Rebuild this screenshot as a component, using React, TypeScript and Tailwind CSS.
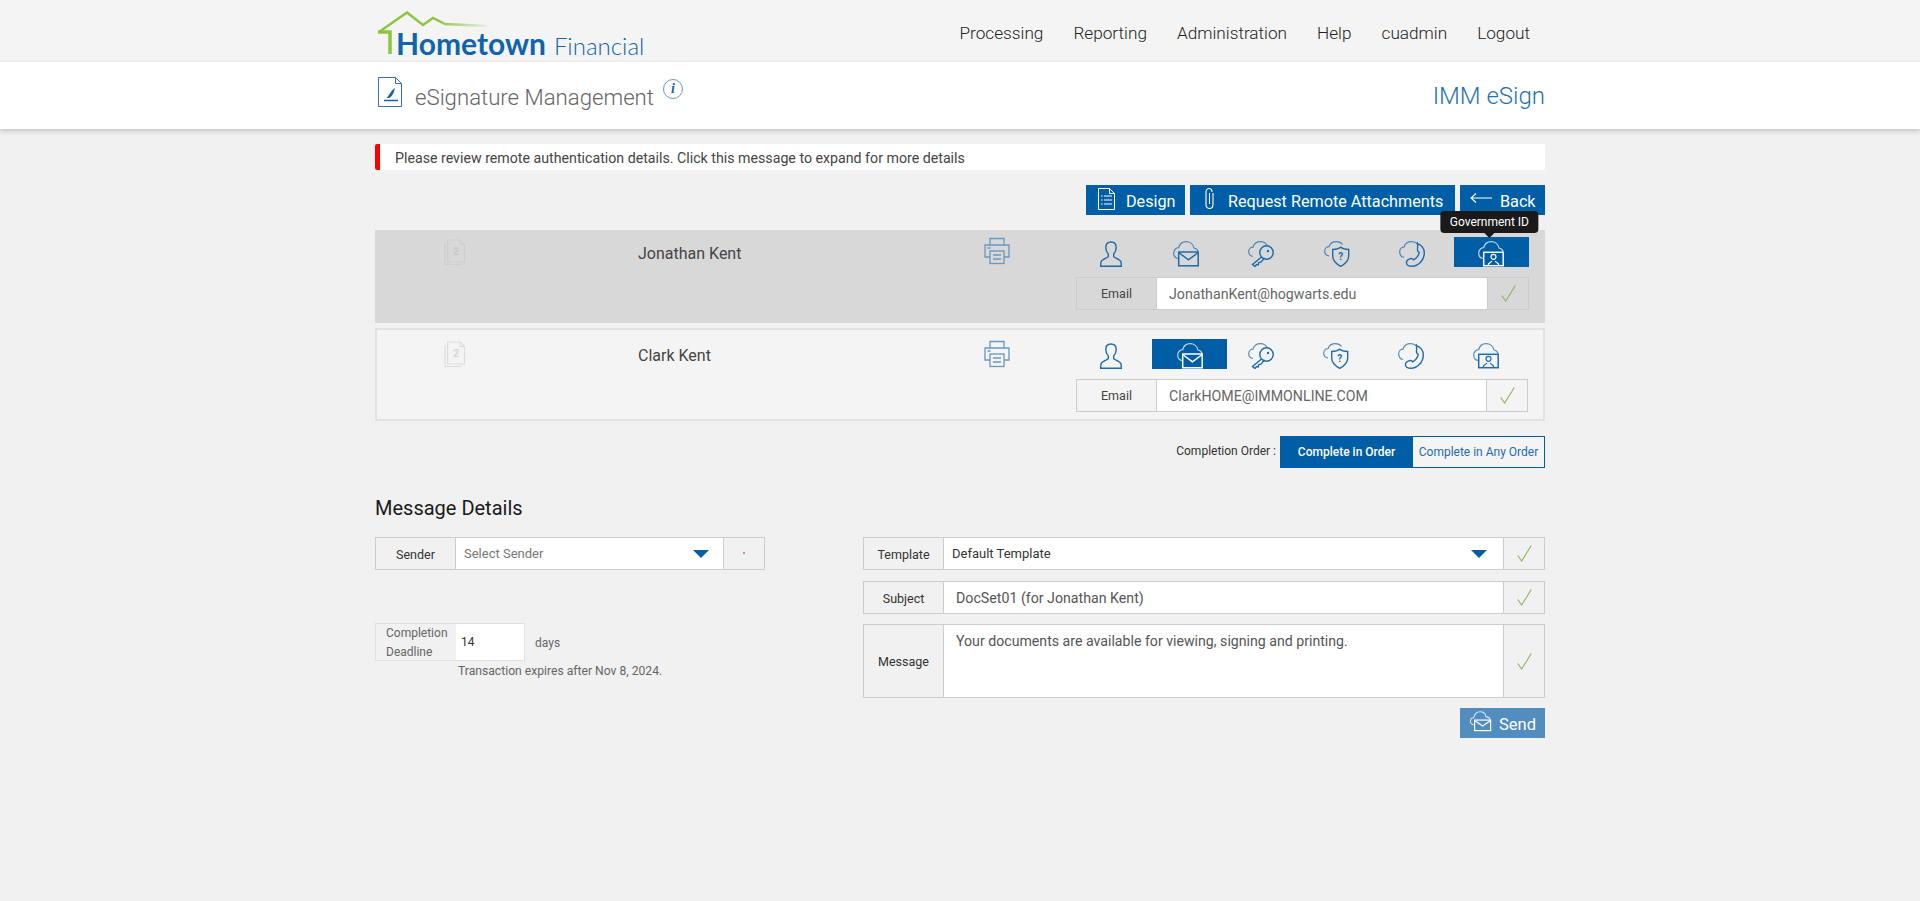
import React from 'react';

const Cloud = () => (
  <path d="M5 17.500C2.300 17 .7 14.500 .7 12 .7 9 3 6.700 5.700 6.700 6.700 3 9.500 .7 13 .7c4 0 7.300 2.600 8 6.300 2 .4 3.500 1.700 4 3.500" opacity=".75" />
);

const PersonIcon = () => (
  <svg viewBox="0 0 22 26" className="h-[26px] w-[22px]" fill="none" stroke="currentColor" strokeWidth="1.400">
    <path d="M11 1c-3.400 0-5.200 2.300-5.200 5.600 0 2.900 1 5 2.500 6.500v2.600C6.800 17 1.800 18.200 1 21c-.3 1.200-.3 2.500-.3 4.200h20.600c0-1.700 0-3-.3-4.200-.8-2.800-5.800-4-7.300-5.300v-2.600c1.500-1.500 2.500-3.600 2.500-6.500C16.200 3.300 14.400 1 11 1z" />
  </svg>
);

const MailIcon = () => (
  <svg viewBox="0 0 26 26" className="h-[26px] w-[26px]" fill="none" stroke="currentColor" strokeWidth="1.200">
    <Cloud />
    <rect x="5.700" y="11" width="19.500" height="13.800" strokeWidth="1.500" />
    <path d="M5.700 11.500l9.750 7.300 9.750-7.300" strokeWidth="1.500" />
  </svg>
);

const KeyIcon = () => (
  <svg viewBox="0 0 26 26" className="h-[26px] w-[26px]" fill="none" stroke="currentColor" strokeWidth="1.200">
    <path d="M5 15.500C2.500 15 .7 13 .7 10.700.7 8 2.800 6.200 5 6.200 6 3 9 .7 12.500.7c2.800 0 5.200 1.300 6.500 3.600" opacity=".75" />
    <circle cx="18.500" cy="11.500" r="6.700" strokeWidth="1.400" />
    <circle cx="20" cy="10" r="1.200" fill="currentColor" stroke="none" />
    <path d="M13.500 16L4.500 23.500l2.500 2 1.500-2 1.800.4.400-2.400 2.300-.4 3.500-4.300" strokeWidth="1.400" />
  </svg>
);

const ShieldIcon = () => (
  <svg viewBox="0 0 26 26" className="h-[26px] w-[26px]" fill="none" stroke="currentColor" strokeWidth="1.200">
    <path d="M5 15C2.500 14.500 .7 12.500 .7 10.200.7 7.500 2.800 5.700 5 5.700 6 2.700 9 .7 12.500.7c2.500 0 4.700 1 6 2.800" opacity=".75" />
    <path d="M8.700 8.500c3.500 0 6.200-.8 8-2.300 1.800 1.500 4.500 2.300 8 2.300v6.500c0 4.500-3.300 7.800-8 10.300-4.700-2.500-8-5.800-8-10.300z" strokeWidth="1.400" />
    <text x="16.700" y="18.500" textAnchor="middle" fontSize="10" fontWeight="700" fill="currentColor" stroke="none" fontFamily="Roboto, sans-serif">?</text>
  </svg>
);

const PhoneIcon = () => (
  <svg viewBox="0 0 26 26" className="h-[26px] w-[26px]" fill="none" stroke="currentColor" strokeWidth="1.200">
    <path d="M5 16.500C2.500 16 .7 13.500 .7 10.700.7 8 2.800 6.200 5 6.200 6 3 9 .7 12.500.7c1.800 0 3.500.5 5 1.600" opacity=".75" />
    <path d="M18 2.500c4.300 1.200 7.300 5 7.300 9.500 0 7-6 13.300-12.300 13.300-3 0-5.200-1.300-5.500-3.300-.3-1.800 1-3.400 3.200-4.200 2-.7 3.300-.3 4 1 2.700-1.200 5.300-4.700 5.500-7.500-1.300-.6-1.900-1.700-1.700-3.500.1-2 .5-4.300-.2-5.800z" strokeWidth="1.400" />
  </svg>
);

const GovIdIcon = () => (
  <svg viewBox="0 0 26 26" className="h-[26px] w-[26px]" fill="none" stroke="currentColor" strokeWidth="1.200">
    <Cloud />
    <rect x="5.700" y="11.300" width="19.500" height="13.400" strokeWidth="1.500" />
    <circle cx="15.500" cy="15.800" r="2.500" />
    <path d="M10 24.700c0-3 2.800-3.200 4-4.600M21 24.700c0-3-2.800-3.200-4-4.600" />
  </svg>
);

const Check = () => (
  <svg viewBox="0 0 15 17" className="h-[17px] w-[15px]" fill="none" stroke="#8db45c" strokeWidth="1.100">
    <path d="M.7 10.500L4.700 16 14.300 .5" />
  </svg>
);

const DocCount = ({ selected }: { selected?: boolean }) => (
  <svg viewBox="0 0 21 26" className="h-[26px] w-[21px]" fill="none" stroke={selected ? '#cecece' : '#dcdcdc'} strokeWidth="1.200">
    <path d="M1 4v21.500h17" />
    <path d="M3.600 1h12.400l4.500 4.500v17.500h-16.900z" />
    <path d="M16 1v4.500h4.500" />
    <text x="12" y="16" textAnchor="middle" fontSize="10.500" fontWeight="700" fill={selected ? '#cacaca' : '#d6d6d6'} stroke="none" fontFamily="Roboto, sans-serif">2</text>
  </svg>
);

const Printer = () => (
  <svg viewBox="0 0 28 28" className="h-7 w-7 text-[#6a97c1]" fill="none" stroke="currentColor" strokeWidth="1.300">
    <path d="M7 8V1.500h14V8" />
    <path d="M7 20H2V8h24v12h-5" />
    <rect x="7" y="14" width="14" height="12.500" />
    <path d="M10 18h8M10 22h8M4.500 11h3" />
  </svg>
);

const signerIcons = [PersonIcon, MailIcon, KeyIcon, ShieldIcon, PhoneIcon, GovIdIcon];

function SignerRow({ name, email, active, selected }: { name: string; email: string; active: number; selected?: boolean }) {
  return (
    <div className={`flex h-[93px] border-2 ${selected ? 'border-[#d8d8d8] bg-[#d8d8d8] pr-[13px]' : 'border-[#e2e2e2] bg-[#f4f4f4] pr-[15px]'}`}>
      <div className="w-[67px]" />
      <div className={`w-[194px] ${selected ? 'pt-[7px]' : 'pt-[11px]'}`}>
        <DocCount selected={selected} />
      </div>
      <div className={`w-[345px] text-[16px] text-[#444] ${selected ? 'pt-[10px]' : 'pt-[14px]'}`}>{name}</div>
      <div className={`w-[93px] ${selected ? 'pt-[5px]' : 'pt-[10px]'}`}>
        <Printer />
      </div>
      <div className={`flex flex-col pl-[1px] ${selected ? 'w-[453px] pt-[5px]' : 'w-[452px] pt-[9px]'}`}>
        <div className="flex h-[30px] text-[#1f6bab]">
          {signerIcons.map((Icon, i) => (
            <div key={i} className={`relative flex w-[75.700px] items-end justify-center ${i === active ? 'bg-[#005ea6] text-white' : 'pr-[8px]'}`}>
              <Icon />
              {selected && i === 5 && (
                <div className="absolute bottom-[34px] left-[calc(50%-2px)] z-10 -translate-x-1/2 whitespace-nowrap rounded bg-[#1a1a1a] px-[9px] py-[3px] text-[12px] leading-[16px] text-white">
                  Government ID
                  <div className="absolute left-1/2 top-full -translate-x-1/2 border-x-[5px] border-t-[5px] border-x-transparent border-t-[#1a1a1a]" />
                </div>
              )}
            </div>
          ))}
        </div>
        <div className="mt-[10px] -ml-[1px] flex h-[33px] border border-[#cccccc]">
          <div className={`flex w-[80px] items-center justify-center border-r border-[#cccccc] pt-[1px] text-[12.500px] text-[#444] ${selected ? 'bg-[#d8d8d8]' : 'bg-[#f4f4f4]'}`}>
            Email
          </div>
          <div className="flex flex-1 items-center bg-white pl-3 pt-[2px] text-[14.200px] text-[#666]">{email}</div>
          <div className="flex w-[41px] items-center justify-center border-l border-[#cccccc]">
            <Check />
          </div>
        </div>
      </div>
    </div>
  );
}

function FieldLabel({ children }: { children: React.ReactNode }) {
  return <div className="flex w-[80px] shrink-0 items-center justify-center border-r border-[#cccccc] bg-[#f1f1f1] pt-[3px] text-[12.500px] text-[#333]">{children}</div>;
}

function CheckCell() {
  return (
    <div className="flex w-[41px] shrink-0 items-center justify-center border-l border-[#cccccc] bg-[#f1f1f1]">
      <Check />
    </div>
  );
}

const Caret = () => <div className="h-0 w-0 border-x-[8px] border-t-[8px] border-x-transparent border-t-[#005ea6]" />;

export default function App() {
  return (
    <div className="min-h-[901px] bg-[#f1f1f1] font-['Roboto',sans-serif]">
      {/* Top nav */}
      <div className="h-[62px] bg-[#f4f4f4]">
        <div className="mx-auto flex w-[1170px] justify-between">
          <div className="relative h-[62px] w-[280px]">
            <svg viewBox="0 0 120 44" className="absolute left-[3px] top-[11px] h-[44px] w-[120px]" fill="none" strokeWidth="2.500">
              <defs>
                <linearGradient id="roof" x1="0" x2="1" y1="0" y2="0">
                  <stop offset="0.55" stopColor="#8cc63f" />
                  <stop offset="1" stopColor="#8cc63f" stopOpacity="0.1" />
                </linearGradient>
              </defs>
              <path d="M1 21L29 1.500 45 14l10-7 12 6 42 2" stroke="url(#roof)" />
              <path d="M0 21h12v22" stroke="#8cc63f" strokeWidth="3.500" />
            </svg>
            <div className="absolute left-[21px] top-[26px] flex items-baseline whitespace-nowrap font-['Lato',sans-serif] text-[#0f64ad]">
              <span className="text-[30px] font-bold leading-[34px]">Hometown</span>
              <span className="ml-[8px] text-[24px] font-light leading-[34px]">Financial</span>
            </div>
          </div>
          <div className="flex items-center pt-[6px] pr-[15px] text-[17.200px] font-light text-[#222]">
            <span>Processing</span>
            <span className="ml-[30px]">Reporting</span>
            <span className="ml-[30px]">Administration</span>
            <span className="ml-[30px]">Help</span>
            <span className="ml-[30px]">cuadmin</span>
            <span className="ml-[30px]">Logout</span>
          </div>
        </div>
      </div>

      {/* Title band */}
      <div className="h-[67px] bg-white shadow-[0_2px_5px_rgba(0,0,0,0.2)]">
        <div className="mx-auto flex w-[1170px] justify-between">
          <div className="flex items-start">
            <svg viewBox="0 0 24 30" className="ml-[3px] mt-[15px] h-[30px] w-[24px]" fill="none" stroke="#3a6fa8" strokeWidth="1">
              <path d="M.5.500h17l6 6v23H.500zM17.500.500v6h6" />
              <path d="M8 21c3-1 4-7 9-10-1 4-2 8-6 10" fill="#1c5fa0" stroke="none" />
              <path d="M6 23.500h14" strokeWidth="1.500" stroke="#1c5fa0" />
            </svg>
            <span className="ml-[13px] mt-[20px] text-[22.200px] font-light leading-[30px] text-[#666]">eSignature Management</span>
            <div className="ml-[9px] mt-[17px] flex h-5 w-5 items-center justify-center rounded-full border border-[#6a97c1] font-['Liberation_Serif',serif] text-[14px] font-bold italic leading-none text-[#1c5fa0]">
              i
            </div>
          </div>
          <span className="mt-[18px] text-[24px] font-light leading-[32px] text-[#1f70b5]">IMM eSign</span>
        </div>
      </div>

      <div className="mx-auto w-[1170px]">
        {/* Alert */}
        <div className="mt-[15px] flex h-[26px] items-center rounded-[2px] border-l-[5px] border-[#f00] bg-white pl-[15px] pt-[3px] text-[14.200px] text-[#444]">
          Please review remote authentication details. Click this message to expand for more details
        </div>

        {/* Actions */}
        <div className="mt-[15px] flex h-[30px] justify-end gap-[5px] text-[16.200px] text-white">
          <div className="flex w-[99px] items-center bg-[#005ea6] pl-[12px]">
            <svg viewBox="0 0 17 22" className="-mt-[3px] h-[22px] w-[17px]" fill="none" stroke="currentColor" strokeWidth="1">
              <path d="M.5.500h11l5 5v16H.500zM11.500.500v5h5" />
              <path d="M3 8h1.500M6 8h8M3 12h1.500M6 12h8M3 16h1.500M6 16h8" strokeWidth="1.200" />
            </svg>
            <span className="ml-[11px] pt-[5px]">Design</span>
          </div>
          <div className="flex w-[265px] items-center bg-[#005ea6] pl-[15px]">
            <svg viewBox="0 0 9 21" className="-mt-[3px] h-[21px] w-[9px]" fill="none" stroke="currentColor" strokeWidth="1.100">
              <path d="M8 5v11.500c0 2.600-1.500 4-3.500 4s-3.500-1.400-3.500-4V4c0-2 1.300-3.500 3-3.500S7 2 7 4" />
              <path d="M4.500 5v11" />
            </svg>
            <span className="ml-[14px] pt-[5px]">Request Remote Attachments</span>
          </div>
          <div className="flex w-[85px] items-center bg-[#005ea6] pl-[10px]">
            <svg viewBox="0 0 22 10" className="-mt-[4px] h-[10px] w-[22px]" fill="none" stroke="currentColor" strokeWidth="1.100">
              <path d="M22 5H1M6 .500L1 5l5 4.500" />
            </svg>
            <span className="ml-[8px] pt-[5px]">Back</span>
          </div>
        </div>

        {/* Signers */}
        <div className="mt-[15px] flex flex-col gap-[5px]">
          <SignerRow name="Jonathan Kent" email="JonathanKent@hogwarts.edu" active={5} selected />
          <SignerRow name="Clark Kent" email="ClarkHOME@IMMONLINE.COM" active={1} />
        </div>

        {/* Completion order */}
        <div className="mt-[15px] flex h-[32px] items-center justify-end text-[12px]">
          <span className="mr-[4px] -mt-[2px] text-[#333]">Completion Order :</span>
          <div className="flex h-full w-[133px] items-center justify-center bg-[#005ea6] font-medium text-white">Complete in Order</div>
          <div className="flex h-full w-[132px] items-center justify-center border border-l-0 border-[#005ea6] bg-[#f4f4f4] text-[#1f6bab]">Complete in Any Order</div>
        </div>

        <h2 className="mt-[27px] text-[20px] font-normal leading-[26px] text-[#1a1a1a]">Message Details</h2>

        <div className="mt-[16px] flex justify-between">
          {/* Left column */}
          <div className="w-[390px]">
            <div className="flex h-[33px] border border-[#cccccc] text-[13px]">
              <FieldLabel>Sender</FieldLabel>
              <div className="flex flex-1 items-center justify-between bg-white pl-2 pr-[14px] text-[#777]">
                <span>Select Sender</span>
                <Caret />
              </div>
              <div className="flex w-[41px] items-center justify-center border-l border-[#cccccc] pb-[2px]">
                <div className="h-[2px] w-[2px] rounded-full bg-[#e0557f]" />
              </div>
            </div>
            <div className="mt-[53px] flex h-[38px] items-center text-[12px]">
              <div className="flex h-full w-[150px] border border-[#e0e0e0]">
                <div className="flex w-[80px] flex-col items-start justify-center bg-[#f1f1f1] pl-[10px] pt-[2px] leading-[19px] text-[#666]">
                  <span>Completion</span>
                  <span>Deadline</span>
                </div>
                <div className="flex flex-1 items-center bg-white pl-[5px] text-[#333]">14</div>
              </div>
              <span className="ml-[10px] pt-[2px] text-[#666]">days</span>
            </div>
            <div className="mt-[2px] pl-[83px] text-[12.150px] leading-[16px] text-[#666]">Transaction expires after Nov 8, 2024.</div>
          </div>

          {/* Right column */}
          <div className="flex w-[682px] flex-col gap-[11px]">
            <div className="flex h-[33px] border border-[#cccccc] text-[13px]">
              <FieldLabel>Template</FieldLabel>
              <div className="flex flex-1 items-center justify-between bg-white pl-2 pr-4 text-[#333]">
                <span>Default Template</span>
                <Caret />
              </div>
              <CheckCell />
            </div>
            <div className="flex h-[33px] border border-[#cccccc]">
              <FieldLabel>Subject</FieldLabel>
              <div className="flex flex-1 items-center bg-white pl-3 pt-[2px] text-[14.200px] text-[#555]">DocSet01 (for Jonathan Kent)</div>
              <CheckCell />
            </div>
            <div className="-mt-[1px] flex h-[74px] border border-[#cccccc]">
              <FieldLabel>Message</FieldLabel>
              <div className="flex-1 bg-white pl-3 pt-[6px] text-[14.150px] leading-[20px] text-[#555]">Your documents are available for viewing, signing and printing.</div>
              <CheckCell />
            </div>
            <div className="-mt-[1px] flex justify-end">
              <div className="flex h-[30px] w-[85px] items-center bg-[#528dc0] pl-[10px] text-[16.500px] text-white">
                <svg viewBox="0 0 24 22" className="-mt-[4px] h-[22px] w-[22px]" fill="none" stroke="currentColor" strokeWidth="1.100">
                  <path d="M4 15c-2 0-3.500-1.800-3.500-4S2 7.500 4 7.500C5 3.500 8 1 11 1c3.500 0 6 2.500 6.500 5.500 2.500 0 4 1 4.500 3" opacity=".8" />
                  <rect x="5" y="10" width="17.500" height="11.500" strokeWidth="1.300" />
                  <path d="M5 10.500l8.750 6 8.750-6" strokeWidth="1.300" />
                </svg>
                <span className="ml-[7px] pt-[4px]">Send</span>
              </div>
            </div>
          </div>
        </div>
      </div>
    </div>
  );
}
